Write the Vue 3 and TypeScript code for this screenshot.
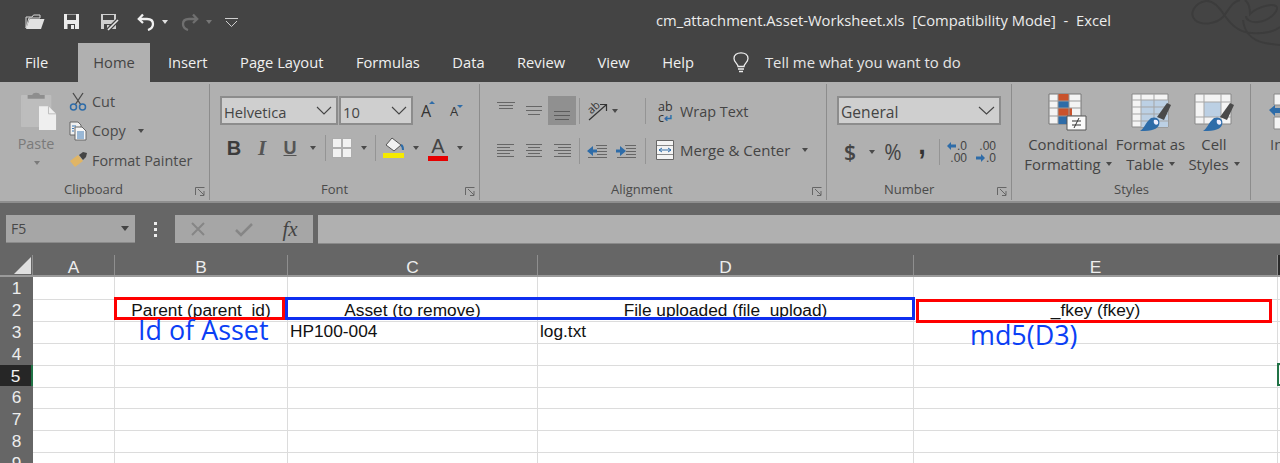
<script setup lang="ts">
const tabs = ['Insert', 'Page Layout', 'Formulas', 'Data', 'Review', 'View', 'Help']
const columns = ['A', 'B', 'C', 'D', 'E', '']
const rows = [1, 2, 3, 4, 5, 6, 7, 8, 9]
const cells: Record<number, string[]> = {
  2: ['', 'Parent (parent_id)', 'Asset (to remove)', 'File uploaded (file_upload)', '_fkey (fkey)', ''],
  3: ['', '', 'HP100-004', 'log.txt', '', ''],
}
function cellText(row: number, col: number): string {
  return cells[row]?.[col] ?? ''
}
</script>

<template>
  <div class="app">
    <header class="titlebar">
      <svg class="swirl" width="100" height="46" viewBox="0 0 100 46" fill="none" stroke="#3c3c3c" stroke-width="2">
        <path d="M60 0C52 2 50 8 43 17C36 24 22 26 15 20C9 14 14 3 26 1C33 0 40 8 45 16C52 26 60 33 72 33C82 34 94 32 100 27" />
        <path d="M65 0C70 4 70 12 70 14C76 8 90 3 96 6C100 9 92 20 78 22C70 23 66 19 66 16" />
        <path d="M63 20C64 30 70 40 85 43C91 44 96 45 100 45" />
      </svg>
      <div class="qat">
        <svg width="20" height="16" viewBox="0 0 20 16"><path d="M1 14V3H7L8.500 1H15V4H4L1 14Z" fill="none" stroke="#d8d8d8" stroke-width="1"/><path d="M4.500 5H19.500L16 15H1Z" fill="#e2e2e2"/></svg>
        <svg class="q-save" width="17" height="17" viewBox="0 0 17 17"><path d="M1 1H16V16H1Z" fill="#ececec"/><path d="M4 1.500H13V7H4Z" fill="#444"/><path d="M4.500 11H12V16H4.500Z" fill="#444"/><path d="M8 12H11V16H8Z" fill="#ececec"/></svg>
        <svg class="q-saveas" width="20" height="18" viewBox="0 0 20 18"><path d="M1 1H16V16H1Z" fill="#cfcfcf"/><path d="M3 2H14V7H3Z" fill="#444"/><path d="M4 11H11V16H4Z" fill="#444"/><path d="M7 12H9.500V16H7Z" fill="#cfcfcf"/><path d="M8 17L18 7" stroke="#444" stroke-width="4"/><path d="M8 17L18 7" stroke="#e8e8e8" stroke-width="1.600"/></svg>
        <svg class="q-undo" width="18" height="18" viewBox="0 0 18 18" fill="none" stroke="#f0f0f0" stroke-width="2.300"><path d="M6 1.500L1.800 6L6 10"/><path d="M2 6H10C14 6 16 8 16 11C16 14 14 16 11 17"/></svg>
        <i class="caret q-c1 light"></i>
        <svg class="q-redo" width="18" height="18" viewBox="0 0 18 18" fill="none" stroke="#6f6f6f" stroke-width="2.300"><path d="M12 1.500L16.200 6L12 10"/><path d="M16 6H8C4 6 2 8 2 11C2 14 4 16 7 17"/></svg>
        <i class="caret q-c2 dim"></i>
        <svg class="q-more" width="13" height="9" viewBox="0 0 13 9" fill="none" stroke="#cfcfcf" stroke-width="1"><path d="M0 .5H13"/><path d="M1 3L6.500 8.500L12 3"/></svg>
      </div>
      <div class="doc-title">cm_attachment.Asset-Worksheet.xls&nbsp; [Compatibility Mode] &nbsp;-&nbsp; Excel</div>
    </header>

    <nav class="tabs">
      <span class="tab-file">File</span>
      <span class="tab-home">Home</span>
      <span class="tab-list">
        <span v-for="tab in tabs" :key="tab">{{ tab }}</span>
      </span>
      <svg class="bulb" width="16" height="21" viewBox="0 0 16 21" fill="none" stroke="#ececec" stroke-width="1.300"><path d="M5 14.500C5 11.500 1 10.500 1 6.500C1 3 4 .8 8 .8C12 .8 15 3 15 6.500C15 10.500 11 11.500 11 14.500Z"/><path d="M5 17H11M6 19.500H10"/></svg>
      <span class="tell">Tell me what you want to do</span>
    </nav>

    <section class="ribbon">
      <!-- Clipboard -->
      <div class="group g-clip">
        <div class="clip-body">
          <div class="paste">
            <svg class="paste-icon" width="36" height="38" viewBox="0 0 38 40"><path d="M1 4H31V36H1Z" fill="#bdbdbd" stroke="#bdbdbd" stroke-width="2" stroke-linejoin="round"/><path d="M7 3H12C12 0 20 0 20 3H25V7H7Z" fill="#8e8e8e"/><path d="M19 15H29L37 23V40H19Z" fill="#efefef"/><path d="M29 15V23H37" fill="none" stroke="#bbb"/></svg>
            <span class="paste-label">Paste</span>
            <i class="caret paste-caret"></i>
          </div>
          <div class="clip-list">
            <div class="clip-row">
              <svg width="18" height="19" viewBox="0 0 18 19" fill="none"><path d="M4 1L12 13M14 1L6 13" stroke="#4a4a4a" stroke-width="1.300"/><circle cx="4.500" cy="15" r="3" stroke="#2e6ca8" stroke-width="1.500"/><circle cx="13.500" cy="15" r="3" stroke="#2e6ca8" stroke-width="1.500"/></svg>
              <span>Cut</span>
            </div>
            <div class="clip-row">
              <svg width="18" height="20" viewBox="0 0 18 20"><path d="M1 1H9L12 4V14H1Z" fill="#f0f0f0" stroke="#666"/><path d="M6 6H13L17 10V19H6Z" fill="#f7f7f7" stroke="#666"/><path d="M3 5H7M3 7.500H5M3 10H5M8 11H15M8 13H15M8 15H15M8 17H15" stroke="#3d78b3"/></svg>
              <span>Copy</span>
              <i class="caret copy-caret"></i>
            </div>
            <div class="clip-row">
              <svg width="18" height="16" viewBox="0 0 18 16"><path d="M1 9L9 3L14 9L6 15Z" fill="#e0b565"/><path d="M10 3L14 0L18 1L17 5L14 8Z" fill="#444"/></svg>
              <span>Format Painter</span>
            </div>
          </div>
        </div>
        <div class="glabel clip-label">Clipboard</div>
        <svg class="launch" width="10" height="9" viewBox="0 0 10 9" fill="none" stroke="#666"><path d="M.5 8V.5H9.500M3 2L9 8M9 4V8.500H5"/></svg>
      </div>

      <!-- Font -->
      <div class="group g-font">
        <div class="font-top">
          <div class="select s-font"><span>Helvetica</span><svg width="16" height="9" viewBox="0 0 16 9" fill="none" stroke="#444" stroke-width="1.100"><path d="M1 1L8 8L15 1"/></svg></div>
          <div class="select s-size"><span>10</span><svg width="16" height="9" viewBox="0 0 16 9" fill="none" stroke="#444" stroke-width="1.100"><path d="M1 1L8 8L15 1"/></svg></div>
          <span class="grow">A<i class="tri up"></i></span>
          <span class="shrink">A<i class="tri down"></i></span>
        </div>
        <div class="font-row">
          <b class="f-b">B</b>
          <i class="f-i">I</i>
          <span class="f-u">U</span>
          <i class="caret"></i>
          <i class="sep"></i>
          <svg width="20" height="20" viewBox="0 0 20 20"><path d="M1 1H9V9H1ZM11 1H19V9H11ZM1 11H9V19H1ZM11 11H19V19H11Z" fill="#f2f2f2"/><path d="M0 0H20V20H0Z" fill="none" stroke="#aaa"/></svg>
          <i class="caret"></i>
          <i class="sep"></i>
          <svg width="22" height="22" viewBox="0 0 22 22"><path d="M9 1L18 8L11 14L3 8Z" fill="#f2f2f2" stroke="#555"/><path d="M18 8C20 9 20 11 20 13" fill="none" stroke="#2e6ca8" stroke-width="2"/><path d="M0 16H21V21H0Z" fill="#f5ea00"/></svg>
          <i class="caret"></i>
          <span class="f-color">A</span>
          <i class="caret"></i>
        </div>
        <div class="glabel font-label">Font</div>
        <svg class="launch" width="10" height="9" viewBox="0 0 10 9" fill="none" stroke="#666"><path d="M.5 8V.5H9.500M3 2L9 8M9 4V8.500H5"/></svg>
      </div>

      <!-- Alignment -->
      <div class="group g-align">
        <div class="align-grid">
          <svg class="al" width="18" height="28" viewBox="0 0 18 28" stroke="#666"><path d="M0 5.500H18M2 8.500H16M2 11.500H16"/></svg>
          <svg class="al" width="18" height="28" viewBox="0 0 18 28" stroke="#666"><path d="M1 9.500H17M1 13.500H17M3 17.500H15"/></svg>
          <span class="al-active"><svg width="18" height="28" viewBox="0 0 18 28" stroke="#5c5c5c"><path d="M1 15.500H17M1 19.500H17M2 23.500H16"/></svg></span>
          <i class="sep"></i>
          <svg class="orient" width="22" height="24" viewBox="0 0 22 24" fill="none" stroke="#333"><path d="M3 21L20 6M14 5.500H20.500V12" stroke-width="1.200"/><text x="2" y="13" font-size="11" font-family="Open Sans, sans-serif" fill="#333" stroke="none" transform="rotate(-42 7 10)">ab</text></svg>
          <i class="caret left"></i>
          <i class="sep"></i>
          <div class="wrap-row">
            <span class="ab-icon">ab<br />c<em>↵</em></span>
            <span>Wrap Text</span>
          </div>

          <svg class="al" width="18" height="20" viewBox="0 0 18 20" stroke="#666"><path d="M0 3.500H17M0 6.500H13M0 9.500H17M0 12.500H13M0 15.500H17"/></svg>
          <svg class="al" width="18" height="20" viewBox="0 0 18 20" stroke="#666"><path d="M1 3.500H17M3 6.500H15M1 9.500H17M3 12.500H15M1 15.500H17"/></svg>
          <svg class="al" width="18" height="20" viewBox="0 0 18 20" stroke="#666"><path d="M1 3.500H18M5 6.500H18M1 9.500H18M5 12.500H18M1 15.500H18"/></svg>
          <i class="sep"></i>
          <svg width="20" height="16" viewBox="0 0 20 16"><path d="M9 2.500H20M10 5.500H20M10 8.500H20M10 11.500H20M1 14.500H20" stroke="#666" fill="none"/><path d="M0 8L6 3V6.500H10V9.500H6V13Z" fill="#2e6ca8"/></svg>
          <svg width="20" height="16" viewBox="0 0 20 16"><path d="M9 2.500H20M10 5.500H20M10 8.500H20M10 11.500H20M1 14.500H20" stroke="#666" fill="none"/><path d="M10 8L4 3V6.500H0V9.500H4V13Z" fill="#2e6ca8"/></svg>
          <i class="sep"></i>
          <div class="wrap-row merge-row">
            <svg class="merge" width="18" height="20" viewBox="0 0 18 20"><path d="M.5 .5H17.500V19.500H.5Z" fill="#f3f3f3" stroke="#666"/><path d="M1 5.500H17M1 14.500H17" stroke="#888"/><path d="M3 10H15M3 10L6 8M3 10L6 12M15 10L12 8M15 10L12 12" stroke="#2e6ca8" fill="none"/></svg>
            <span>Merge &amp; Center</span>
            <i class="caret merge-caret"></i>
          </div>
        </div>
        <div class="glabel align-label">Alignment</div>
        <svg class="launch" width="10" height="9" viewBox="0 0 10 9" fill="none" stroke="#666"><path d="M.5 8V.5H9.500M3 2L9 8M9 4V8.500H5"/></svg>
      </div>

      <!-- Number -->
      <div class="group g-number">
        <div class="select s-general"><span>General</span><svg width="17" height="9" viewBox="0 0 17 9" fill="none" stroke="#444" stroke-width="1.100"><path d="M1 1L8.500 8L16 1"/></svg></div>
        <div class="num-row">
          <span class="n-dollar">$</span>
          <i class="caret"></i>
          <span class="n-pct">%</span>
          <span class="n-comma">,</span>
          <i class="sep"></i>
          <div class="n-dec">
            <span class="n-line"><svg width="9" height="8" viewBox="0 0 9 8"><path d="M0 4L4 0V2.500H9V5.500H4V8Z" fill="#2e6ca8"/></svg>.0</span>
            <span class="n-line">.00</span>
          </div>
          <div class="n-dec">
            <span class="n-line">.00</span>
            <span class="n-line"><svg width="9" height="8" viewBox="0 0 9 8"><path d="M9 4L5 0V2.500H0V5.500H5V8Z" fill="#2e6ca8"/></svg>.0</span>
          </div>
        </div>
        <div class="glabel num-label">Number</div>
        <svg class="launch" width="10" height="9" viewBox="0 0 10 9" fill="none" stroke="#666"><path d="M.5 8V.5H9.500M3 2L9 8M9 4V8.500H5"/></svg>
      </div>

      <!-- Styles -->
      <div class="group g-styles">
        <div class="style-cols">
          <div class="style-col">
            <svg width="40" height="38" viewBox="0 0 40 38"><path d="M1 1H33V31H1Z" fill="#f4f4f4" stroke="#777"/><path d="M10 1H21V8H10Z" fill="#c9522c"/><path d="M10 8H21V15H10Z" fill="#2e6ca8"/><path d="M10 15H24V23H10Z" fill="#c9522c"/><path d="M10 23H21V31H10Z" fill="#2e6ca8"/><path d="M1 8H33M1 15H33M1 23H33M10 1V31M21 1V31" stroke="#999" fill="none"/><path d="M19 23H38V37H19Z" fill="#fafafa" stroke="#555"/><path d="M24 28H33M24 32H33M31 25L26 35" stroke="#333" fill="none"/></svg>
            <span>Conditional</span>
            <span>Formatting<i class="caret s-caret"></i></span>
          </div>
          <div class="style-col">
            <svg width="40" height="38" viewBox="0 0 40 38"><path d="M1 1H37V34H1Z" fill="#f4f4f4" stroke="#888"/><path d="M10 7H37V34H10Z" fill="#bcd0e4"/><path d="M1 7H37M1 14H37M1 21H37M1 28H37M10 1V34M23 1V34" stroke="#a5a5a5" fill="none"/><path d="M26 24L36 10L40 12L33 27Z" fill="#4a4a4a"/><path d="M9 38C13 36 14 30 20 25C25 23 30 26 28 32C26 36 22 38 9 38Z" fill="#2e6ca8"/><path d="M23 27C26 26 28 28 27 31C24 33 22 30 23 27Z" fill="#eef"/></svg>
            <span>Format as</span>
            <span>Table<i class="caret s-caret"></i></span>
          </div>
          <div class="style-col">
            <svg width="40" height="38" viewBox="0 0 40 38"><path d="M1 1H37V31H1Z" fill="#f4f4f4" stroke="#888"/><path d="M10 9H27V24H10Z" fill="#bcd0e4"/><path d="M1 9H37M1 24H37M10 1V31M27 1V31" stroke="#a5a5a5" fill="none"/><path d="M26 24L36 10L40 12L33 27Z" fill="#4a4a4a"/><path d="M9 38C13 36 14 30 20 25C25 23 30 26 28 32C26 36 22 38 9 38Z" fill="#2e6ca8"/><path d="M23 27C26 26 28 28 27 31C24 33 22 30 23 27Z" fill="#eef"/></svg>
            <span>Cell</span>
            <span>Styles<i class="caret s-caret"></i></span>
          </div>
        </div>
        <div class="glabel styles-label">Styles</div>
      </div>

      <!-- Cells (cut off) -->
      <div class="group g-cells">
        <svg width="14" height="38" viewBox="0 0 14 38"><path d="M5 1H14V12H5ZM5 24H14V36H5Z" fill="#f4f4f4" stroke="#888"/><path d="M0 17L6 12V15H14V20H6V23Z" fill="#2e6ca8"/></svg>
        <span class="cells-in">In</span>
      </div>
    </section>

    <section class="formula">
      <div class="namebox"><span>F5</span><i class="caret name-caret"></i></div>
      <div class="dots"><i></i><i></i><i></i></div>
      <div class="fx-box">
        <svg width="16" height="16" viewBox="0 0 16 16" fill="none" stroke="#868686" stroke-width="2"><path d="M2 2L14 14M14 2L2 14"/></svg>
        <svg width="18" height="15" viewBox="0 0 18 15" fill="none" stroke="#868686" stroke-width="2.500"><path d="M1 8L6 13L17 2"/></svg>
        <span class="fx">fx</span>
      </div>
      <div class="fx-input"></div>
    </section>

    <section class="sheet">
      <div class="head-row">
        <div class="corner"><i></i></div>
        <div v-for="c in columns" :key="c" class="col-head">{{ c }}</div>
      </div>
      <div v-for="r in rows" :key="r" class="row">
        <div class="row-head" :class="{ active: r === 5 }">{{ r }}</div>
        <div v-for="(c, i) in columns" :key="c" class="cell" :class="{ center: r === 2 }">{{ cellText(r, i) }}</div>
      </div>
      <div class="mark red b1"></div>
      <div class="mark blue"></div>
      <div class="mark red b2"></div>
      <div class="note n1">Id of Asset</div>
      <div class="note n2">md5(D3)</div>
      <div class="selection"></div>
    </section>
  </div>
</template>

<style scoped>
.app {
  width: 1280px;
  height: 463px;
  overflow: hidden;
  font-family: "Open Sans", "Noto Sans", sans-serif;
  background: #fff;
}
i, em, u { font-style: normal; text-decoration: none; }

.caret {
  display: block;
  width: 0;
  height: 0;
  border-left: 3.5px solid transparent;
  border-right: 3.5px solid transparent;
  border-top: 4px solid #4a4a4a;
  justify-self: center;
}
.caret.left { justify-self: start; }
.caret.light { border-top-color: #e0e0e0; }
.caret.dim { border-top-color: #777; }
.sep {
  display: block;
  width: 1px;
  height: 26px;
  background: #949494;
  justify-self: center;
}

.titlebar {
  position: relative;
  height: 43px;
  background: #444;
  display: flex;
  align-items: center;
  color: #ececec;
}
.swirl { position: absolute; right: 0; top: 0; }
.qat { display: flex; align-items: center; padding-left: 25px; }
.q-save { margin-left: 18px; }
.q-saveas { margin-left: 20px; }
.q-undo { margin-left: 17px; }
.q-c1 { margin-left: 7px; }
.q-redo { margin-left: 13px; }
.q-c2 { margin-left: 7px; }
.q-more { margin-left: 13px; margin-top: 2px; }
.doc-title {
  margin-left: auto;
  margin-right: 169px;
  padding-bottom: 3px;
  font-size: 14.75px;
  white-space: nowrap;
}

.tabs {
  height: 39px;
  box-sizing: border-box;
  padding-bottom: 1px;
  background: #444;
  display: flex;
  align-items: center;
  color: #f0f0f0;
  font-size: 14.7px;
  white-space: nowrap;
}
.tab-file { margin-left: 25px; width: 53px; }
.tab-home {
  align-self: flex-start;
  width: 72px;
  height: 39px;
  line-height: 38px;
  text-align: center;
  background: #b0b0b0;
  color: #444;
}
.tab-list { display: flex; gap: 32.5px; margin-left: 18px; }
.bulb { margin-left: 39px; }
.tell { margin-left: 16px; color: #e6e6e6; font-size: 14.9px; }

.ribbon {
  height: 119px;
  background: #b0b0b0;
  display: flex;
  color: #4a4a4a;
  font-size: 14.4px;
  white-space: nowrap;
}
.group {
  position: relative;
  flex: none;
  height: 116px;
  border-right: 1px solid #8c8c8c;
  margin-top: 2px;
}
.glabel {
  position: absolute;
  top: 96px;
  font-size: 13px;
  line-height: 18px;
}
.launch { position: absolute; top: 103px; right: 4px; }

.g-clip { width: 209px; }
.clip-body { display: flex; padding: 3px 0 0 19px; }
.paste {
  width: 38px;
  display: flex;
  flex-direction: column;
  align-items: center;
  padding-top: 5px;
}
.paste-icon { margin-left: 2px; }
.paste-label { color: #7a7a7a; margin-top: 5px; margin-right: 4px; line-height: 18px; }
.paste-caret { margin-top: 8px; border-top-color: #7a7a7a; margin-right: 2px; }
.clip-list { margin-left: 12px; }
.clip-row { height: 29.3px; display: flex; align-items: center; }
.clip-row svg { width: 18px; margin-right: 5px; flex: none; }
.copy-caret { margin-left: 12px; }
.clip-label { left: 64px; }

.g-font { padding-left: 10px; box-sizing: border-box; width: 270px; }
.font-top { display: flex; align-items: center; padding-top: 12px; }
.select {
  box-sizing: border-box;
  height: 29px;
  background: #cfcfcf;
  border: 2px solid #8c8c8c;
  display: flex;
  align-items: center;
  justify-content: space-between;
  padding: 0 4px 0 2px;
  color: #444;
  font-size: 14.7px;
}
.select span { padding-top: 2px; }
.s-font { width: 118px; }
.s-size { width: 74px; margin-left: 1px; }
.grow { position: relative; margin-left: 8px; width: 26px; font-size: 16px; color: #333; }
.shrink { position: relative; margin-left: 3px; font-size: 13px; color: #333; }
.tri { position: absolute; width: 0; height: 0; border-left: 3px solid transparent; border-right: 3px solid transparent; }
.tri.up { border-bottom: 3px solid #2e6ca8; left: 8px; top: 1px; }
.tri.down { border-top: 3px solid #2e6ca8; left: 7px; top: 3px; }
.font-row {
  display: grid;
  grid-template-columns: 28px 28px 28px 18px 6px 27px 18px 4px 33px 12px 32px 12px;
  justify-items: center;
  align-items: center;
  height: 28px;
  margin-top: 9px;
  font-size: 18px;
}
.f-b { font-family: "Liberation Sans", sans-serif; font-weight: 700; color: #3c3c3c; font-size: 20px; }
.f-i { font-family: "Liberation Serif", serif; font-weight: 700; font-style: italic; color: #555; font-size: 21px; }
.f-u { font-family: "Liberation Sans", sans-serif; font-weight: 700; text-decoration: underline; color: #555; font-size: 18px; }
.f-color { font-size: 20px; line-height: 20px; color: #444; border-bottom: 5px solid #e60000; padding: 0 3px; font-family: "Liberation Sans", sans-serif; }
.font-label { left: 111px; }

.g-align { width: 347px; padding-left: 12px; box-sizing: border-box; }
.align-grid {
  display: grid;
  grid-template-columns: 28px 28px 28px 6px 30px 28px 10px 1fr;
  grid-template-rows: 29px 28px;
  row-gap: 12px;
  padding-top: 12px;
  justify-items: center;
  align-items: center;
}
.al-active {
  width: 28px;
  height: 29px;
  background: #909090;
  display: flex;
  justify-content: center;
}
.orient { overflow: visible; }
.wrap-row { justify-self: start; display: flex; align-items: center; color: #444; padding-top: 2px; }
.merge-row { font-size: 15px; padding-top: 0; padding-bottom: 2px; }
.ab-icon {
  width: 30px;
  font-size: 12.5px;
  line-height: 11px;
  padding-left: 8px;
  box-sizing: border-box;
  color: #333;
}
.ab-icon em { color: #2e6ca8; font-weight: 700; font-size: 11px; }
.merge { margin-left: 6px; margin-right: 6px; }
.merge-caret { margin-left: 12px; }
.align-label { left: 131px; }

.g-number { width: 185px; padding-left: 10px; box-sizing: border-box; }
.s-general { width: 164px; margin-top: 12px; font-size: 15.6px; }
.num-row {
  display: grid;
  grid-template-columns: 26px 18px 24px 32px 4px 33px 25px;
  justify-items: center;
  align-items: center;
  height: 28px;
  margin-top: 10px;
}
.n-dollar { font-size: 21px; font-weight: 600; color: #444; }
.n-pct { font-size: 21px; color: #444; }
.n-comma {
  font-family: "Liberation Sans", sans-serif;
  font-size: 27px;
  font-weight: 700;
  line-height: 20px;
  padding-bottom: 14px;
  padding-left: 2px;
  color: #333;
}
.n-dec {
  display: flex;
  flex-direction: column;
  align-items: flex-end;
  font-size: 12px;
  line-height: 12px;
  color: #444;
  font-family: "Liberation Sans", sans-serif;
  width: 19px;
}
.n-line { display: flex; align-items: center; gap: 1px; }
.num-label { left: 57px; }

.g-styles { width: 239px; padding-left: 6px; box-sizing: border-box; }
.style-cols { display: grid; grid-template-columns: 100px 65px 62px; padding-top: 9px; }
.style-col { display: flex; flex-direction: column; align-items: center; color: #444; line-height: 20px; font-size: 14.9px; }
.style-col svg { height: 38px; margin-bottom: 3px; }
.style-col span { display: flex; align-items: center; }
.s-caret { margin-left: 5px; }
.styles-label { left: 102px; }

.g-cells { border: none; width: 28px; padding-left: 18px; padding-top: 9px; }
.cells-in { position: absolute; left: 19px; top: 50px; font-size: 14.9px; }

.formula {
  height: 54px;
  box-sizing: border-box;
  border-top: 2px solid #8e8e8e;
  background: #666;
  display: flex;
  align-items: flex-start;
  padding-top: 12px;
}
.namebox {
  box-sizing: border-box;
  width: 129px;
  height: 28px;
  margin-left: 6px;
  background: #a6a6a6;
  border-bottom: 1px solid #8a8a8a;
  display: flex;
  align-items: center;
  justify-content: space-between;
  padding: 0 6px 0 5px;
  color: #484848;
  font-size: 14px;
}
.name-caret { border-left-width: 4px; border-right-width: 4px; border-top-width: 5px; border-top-color: #444; }
.dots {
  width: 40px;
  height: 28px;
  display: flex;
  flex-direction: column;
  align-items: center;
  justify-content: center;
  gap: 3px;
}
.dots i { width: 3px; height: 3px; background: #eee; }
.fx-box {
  width: 138px;
  height: 28px;
  background: #a6a6a6;
  display: grid;
  grid-template-columns: 46px 46px 46px;
  justify-items: center;
  align-items: center;
}
.fx {
  font-family: "Liberation Serif", serif;
  font-style: italic;
  font-size: 21px;
  color: #444;
  line-height: 24px;
}
.fx-input { flex: 1; height: 28px; margin-left: 5px; background: #b0b0b0; border-bottom: 1px solid #8a8a8a; }

.sheet { position: relative; font-family: "Liberation Sans", Arial, sans-serif; font-size: 17.3px; }
.head-row, .row {
  display: grid;
  grid-template-columns: 33px 82px 173px 250px 376px 364px 2px;
}
.head-row { height: 22px; background: #666; color: #ededed; box-sizing: border-box; border-bottom: 2px solid #9a9a9a; }
.corner { position: relative; border-right: 1px solid #8f8f8f; }
.corner i {
  position: absolute;
  right: 1px;
  bottom: 1px;
  width: 0;
  height: 0;
  border-left: 17px solid transparent;
  border-bottom: 17px solid #dfdfdf;
}
.col-head {
  text-align: center;
  line-height: 24px;
  height: 20px;
  border-right: 1px solid #8f8f8f;
}
.col-head:last-child { background: #2b2b2b; border: none; }
.row { height: 21.9px; box-sizing: border-box; }
.row-head {
  background: #666;
  color: #ededed;
  text-align: center;
  line-height: 22px;
  box-sizing: border-box;
  border-bottom: 1px solid #909090;
}
.row-head.active { background: #262626; border-right: 2px solid #217346; color: #f2f2f2; }
.cell {
  box-sizing: border-box;
  border-right: 1px solid #dcdcdc;
  border-bottom: 1px solid #dcdcdc;
  padding-left: 2px;
  line-height: 21px;
  color: #111;
  white-space: nowrap;
  overflow: hidden;
}
.cell.center { text-align: center; padding-left: 0; line-height: 23px; }
.cell:last-child { border-right: none; }

.mark { position: absolute; box-sizing: border-box; border: 3px solid; pointer-events: none; }
.red { border-color: #ff0000; }
.blue { left: 285px; top: 42px; width: 630px; height: 23px; border-color: #0f2ff0; }
.b1 { left: 114px; top: 42px; width: 171px; height: 23px; }
.b2 { left: 916px; top: 44px; width: 356px; height: 24px; }
.note {
  position: absolute;
  font-family: "Open Sans", "Noto Sans", sans-serif;
  font-size: 26.9px;
  line-height: 30px;
  color: #0b3ff5;
  white-space: nowrap;
}
.n1 { left: 138px; top: 60px; }
.n2 { left: 970px; top: 65px; }
.selection {
  position: absolute;
  left: 1277px;
  top: 108px;
  width: 8px;
  height: 23px;
  box-sizing: border-box;
  border: 2px solid #217346;
}
</style>
